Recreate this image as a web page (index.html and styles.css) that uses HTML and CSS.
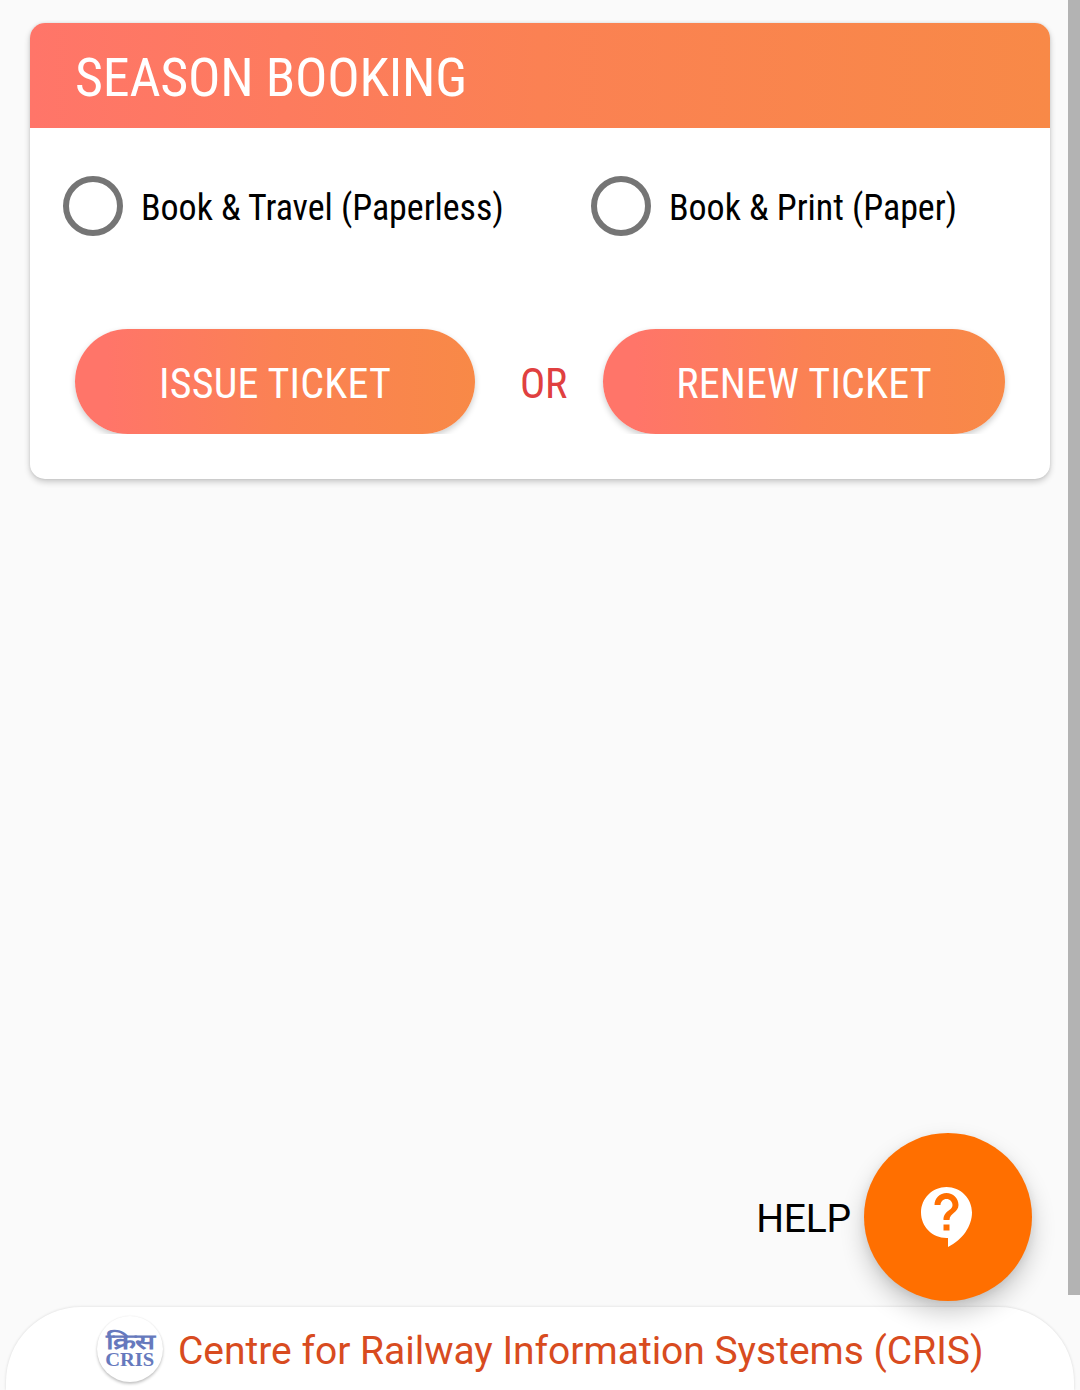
FILE: index.html
```html
<!DOCTYPE html>
<html lang="en">
<head>
<meta charset="utf-8">
<title>Season Booking</title>
<link rel="stylesheet" href="styles.css">
</head>
<body>
<main class="page">
  <section class="card">
    <h1 class="card-title"><span>SEASON BOOKING</span></h1>
    <div class="options">
      <label class="option"><i class="radio"></i><span>Book &amp; Travel (Paperless)</span></label>
      <label class="option"><i class="radio"></i><span>Book &amp; Print (Paper)</span></label>
    </div>
    <div class="actions">
      <div class="clip"><button class="btn">ISSUE TICKET</button></div>
      <span class="or">OR</span>
      <div class="clip"><button class="btn">RENEW TICKET</button></div>
    </div>
  </section>
  <div class="help">
    <span class="help-label">HELP</span>
    <button class="fab" aria-label="Help">
      <svg width="72" height="72" viewBox="0 0 24 24" fill="#fff"><path d="M11.5 2C6.81 2 3 5.81 3 10.5S6.81 19 11.5 19h.5v3c4.86-2.34 8-7 8-11.5C20 5.81 16.19 2 11.5 2zm1 14.5h-2v-2h2v2zm0-3.5h-2c0-3.25 3-3 3-5 0-1.1-.9-2-2-2s-2 .9-2 2h-2c0-2.21 1.79-4 4-4s4 1.79 4 4c0 2.5-3 2.75-3 5z"/></svg>
    </button>
  </div>
  <footer class="footer">
    <div class="logo"><span class="logo-hi">क्रिस</span><span class="logo-en">CRIS</span></div>
    <span class="org">Centre for Railway Information Systems (CRIS)</span>
  </footer>
  <div class="scrollbar"></div>
</main>
</body>
</html>
```
FILE: styles.css
```css
* { box-sizing: border-box; }
body { margin: 0; background: #fafafa; font-family: Roboto, "Liberation Sans", sans-serif; color: #000; }
.page { position: relative; height: 1390px; padding-top: 23px; display: flex; flex-direction: column; overflow: hidden; }
.card { width: 1020px; height: 456px; margin-left: 30px; border-radius: 15px; background: #fff; box-shadow: 0 3px 6px rgba(0,0,0,.2), 0 0 3px rgba(0,0,0,.1); font-family: "Roboto Condensed", Roboto, sans-serif; font-stretch: 75%; }
.card-title { margin: 0; height: 105px; padding: 2px 0 0 45px; border-radius: 15px 15px 0 0; background: linear-gradient(90deg, #ff7569, #fb8153 50%, #f88947); color: #fff; font-size: 54px; font-weight: 400; line-height: 105px; letter-spacing: -.22px; white-space: nowrap; }
.options { display: grid; grid-template-columns: 528px 1fr; padding: 48px 0 0 33px; }
.option { display: flex; align-items: center; gap: 18px; height: 60px; font-size: 36px; letter-spacing: -.05px; white-space: nowrap; }
.option span { padding-top: 4px; }
.radio { width: 60px; height: 60px; border: 6px solid #757575; border-radius: 50%; }
.actions { display: grid; grid-template-columns: 400px 128px 402px; margin: 93px 45px 0; }
.clip { height: 105px; clip-path: inset(-4px -10px 0 -10px); }
.btn { display: block; width: 100%; height: 105px; padding: 4px 0 0; border: 0; border-radius: 53px; background: linear-gradient(90deg, #ff7569 8%, #fb8154 50%, #f88947); box-shadow: 0 3px 6px rgba(0,0,0,.2); color: #fff; font: inherit; font-size: 42px; letter-spacing: .2px; }
.or { padding: 2px 0 0 9px; text-align: center; color: #e04040; font-size: 42px; line-height: 105px; letter-spacing: -.3px; }
.help { display: flex; align-items: center; justify-content: flex-end; gap: 13px; margin: auto 48px 6px 0; position: relative; z-index: 1; }
.help-label { padding-top: 3px; font-size: 39px; letter-spacing: -.2px; }
.fab { display: flex; align-items: center; justify-content: center; width: 168px; height: 168px; padding: 0; border: 0; border-radius: 50%; background: #ff6f00; box-shadow: 0 12px 24px rgba(0,0,0,.2), 0 3px 8px rgba(0,0,0,.08); }
.footer { display: flex; gap: 15px; width: 1068px; height: 83px; margin-left: 6px; padding: 9px 0 0 91px; border-radius: 75px 75px 0 0; background: #fff; box-shadow: 0 0 3px rgba(0,0,0,.14); }
.logo { display: flex; flex-direction: column; align-items: center; width: 66px; height: 66px; padding-top: 14px; border-radius: 50%; background: #fff; box-shadow: 0 2px 3px rgba(0,0,0,.22), 0 0 2px rgba(0,0,0,.08); color: #6679bd; }
.logo-hi { height: 20px; font-size: 21px; line-height: 24px; font-weight: 700; transform: scaleX(1.42); }
.logo-en { font: 700 19px/19px "Liberation Serif", serif; transform: scaleX(1.08); }
.org { padding-top: 2px; color: #d84b20; font-size: 39px; line-height: 66px; letter-spacing: -.02px; white-space: nowrap; }
.scrollbar { position: absolute; top: 0; right: 0; width: 12px; height: 1295px; background: #b3b3b3; }
```
